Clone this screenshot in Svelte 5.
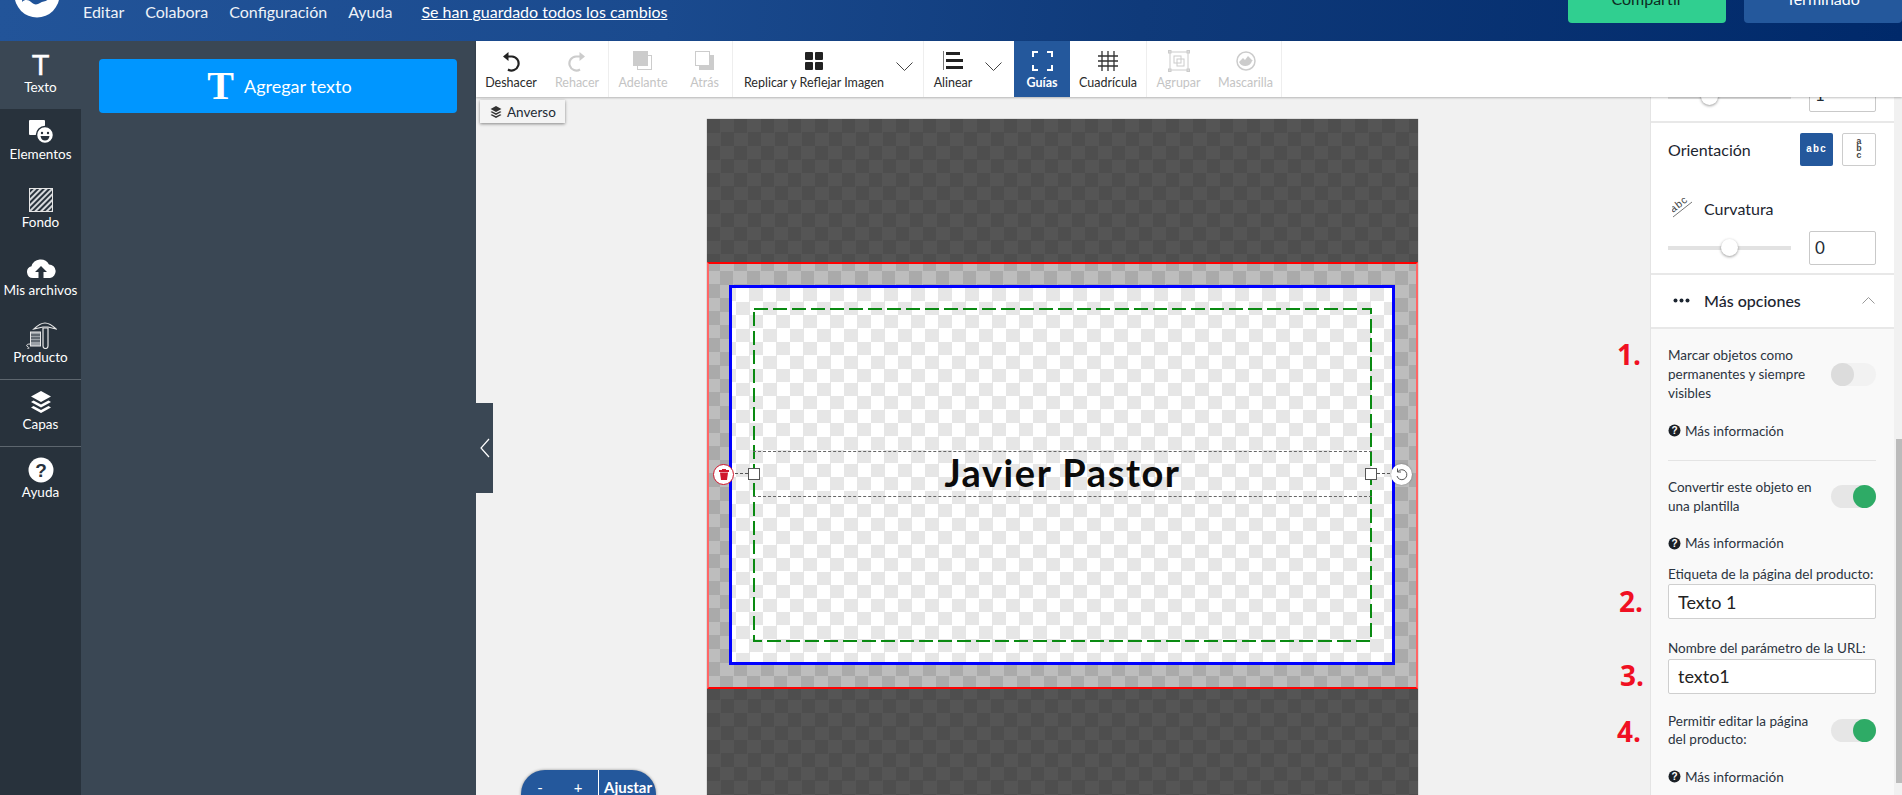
<script lang="ts">
	const nav = ["Editar", "Colabora", "Configuración", "Ayuda"];
	const rail = [
		{ id: "texto", label: "Texto", active: true },
		{ id: "elementos", label: "Elementos" },
		{ id: "fondo", label: "Fondo" },
		{ id: "archivos", label: "Mis archivos" },
		{ id: "producto", label: "Producto", divider: true },
		{ id: "capas", label: "Capas", divider: true },
		{ id: "ayuda", label: "Ayuda" }
	];
	const tools = [
		{ id: "undo", label: "Deshacer", w: 70 },
		{ id: "redo", label: "Rehacer", w: 63, off: true, sep: true },
		{ id: "front", label: "Adelante", w: 68, off: true },
		{ id: "back", label: "Atrás", w: 56, off: true, sep: true },
		{ id: "mirror", label: "Replicar y Reflejar Imagen", w: 162 },
		{ id: "chev", label: "", w: 29, sep: true },
		{ id: "align", label: "Alinear", w: 58 },
		{ id: "chev", label: "", w: 32 },
		{ id: "guides", label: "Guías", w: 56, active: true },
		{ id: "grid", label: "Cuadrícula", w: 77, sep: true },
		{ id: "group", label: "Agrupar", w: 63, off: true },
		{ id: "mask", label: "Mascarilla", w: 72, off: true, sep: true }
	];
	const marks = [
		{ n: "1.", cls: "m1" },
		{ n: "2.", cls: "m2" },
		{ n: "3.", cls: "m3" },
		{ n: "4.", cls: "m4" }
	];
</script>

<div class="app">
	<header class="top">
		<svg class="logo" viewBox="0 0 46 46" width="46" height="46">
			<circle cx="23" cy="23" r="22.5" fill="#fff" />
			<path d="M8 30c3-3 7-2 9 0 3 3 6 3 9 1 3-2 7-1 9-5 1-2 1-3 0-5-1 3-4 4-7 4-4 0-6 3-9 2-3-1-3-4-6-4-3 0-5 3-5 7z" fill="#1f5399" />
		</svg>
		<nav class="nav">
			{#each nav as item}
				<span>{item}</span>
			{/each}
			<a class="saved" href="#top">Se han guardado todos los cambios</a>
		</nav>
		<div class="actions">
			<button class="share">Compartir</button>
			<button class="done">Terminado</button>
		</div>
	</header>

	<div class="work">
		<aside class="rail">
			{#each rail as r}
				<div class="rail-item" class:active={r.active} class:divider={r.divider}>
					<div class="rail-icon">
						{#if r.id === "texto"}
							<span class="t-thin">T</span>
						{:else if r.id === "elementos"}
							<svg width="26" height="24" viewBox="0 0 26 24">
								<rect x="1" y="0" width="16" height="15" rx="1" fill="#fff" />
								<circle cx="17" cy="15" r="8.5" fill="#fff" stroke="#28323c" stroke-width="1.5" />
								<circle cx="14" cy="13" r="1.2" fill="#28323c" />
								<circle cx="20" cy="13" r="1.2" fill="#28323c" />
								<path d="M12.5 16h9c-.5 3-2 4.500-4.500 4.500s-4-1.500-4.500-4.500z" fill="#28323c" />
							</svg>
						{:else if r.id === "fondo"}
							<svg width="24" height="24" viewBox="0 0 24 24">
								<defs>
									<pattern id="hatch" width="4" height="4" patternUnits="userSpaceOnUse" patternTransform="rotate(45)">
										<rect width="4" height="4" fill="#28323c" />
										<rect width="2" height="4" fill="#d5d8db" />
									</pattern>
								</defs>
								<rect x=".5" y=".5" width="23" height="23" fill="url(#hatch)" stroke="#e6e6e6" />
							</svg>
						{:else if r.id === "archivos"}
							<svg width="30" height="20" viewBox="0 0 30 20">
								<path d="M7 20a6 6 0 0 1-1.500-11.800A9.500 9.500 0 0 1 23 6.500 6.800 6.800 0 0 1 24 20z" fill="#fff" />
								<path d="M15 8l-6 6h3.500v6h5v-6H21z" fill="#28323c" />
							</svg>
						{:else if r.id === "producto"}
							<svg width="32" height="27" viewBox="0 0 32 27" fill="none" stroke="#e8e8e8">
								<path d="M9 7C13 3 17 1 20 1c3 0 7 2 11 6l-8-2h-5z" stroke-width="1.200" />
								<path d="M18 6h5v18a2.500 2.500 0 0 1-5 0z" stroke-width="1.200" />
								<rect x="5.500" y="10" width="10" height="14" fill="#9aa0a6" stroke="#e8e8e8" />
								<path d="M6 13h9M6 16h9M6 19h9" stroke="#28323c" />
								<path d="M5 22c-4 0-4 2-2 3s1 2-1 2" stroke-width="1" />
							</svg>
						{:else if r.id === "capas"}
							<svg width="20" height="22" viewBox="0 0 20 22" fill="#fff">
								<path d="M10 0l10 5.500-10 5.500L0 5.500z" />
								<path d="M2.500 9.500L10 13.500l7.500-4 2.500 1.500-10 5.500L0 11z" />
								<path d="M2.500 15L10 19l7.500-4 2.500 1.500L10 22 0 16.500z" />
							</svg>
						{:else}
							<svg width="26" height="26" viewBox="0 0 26 26">
								<circle cx="13" cy="13" r="12.500" fill="#fff" />
								<text x="13" y="19.500" text-anchor="middle" class="q">?</text>
							</svg>
						{/if}
					</div>
					<span class="rail-label">{r.label}</span>
				</div>
			{/each}
		</aside>

		<section class="panel">
			<button class="add"><span class="t-slab">T</span>Agregar texto</button>
		</section>

		<div class="tab">
			<svg width="10" height="20" viewBox="0 0 10 20" fill="none" stroke="#fff" stroke-width="1.200">
				<path d="M9 1L1 10l8 9" />
			</svg>
		</div>

		<main class="main">
			<div class="toolbar">
				{#each tools as t}
					<div class="tool" class:off={t.off} class:on={t.active} class:sep={t.sep} style:width="{t.w}px">
						<div class="tool-icon">
							{#if t.id === "undo"}
								<svg width="22" height="22" viewBox="0 0 22 22" fill="none" stroke="#222" stroke-width="2.200">
									<path d="M7 6.500h5a7 7 0 1 1-4 13" />
									<path d="M8.500 2L3 6.500 8.500 11z" fill="#222" stroke="none" />
								</svg>
							{:else if t.id === "redo"}
								<svg width="22" height="22" viewBox="0 0 22 22" fill="none" stroke="#ccc" stroke-width="2.200">
									<path d="M15 6.500h-5a7 7 0 1 0 4 13" />
									<path d="M13.500 2L19 6.500 13.500 11z" fill="#ccc" stroke="none" />
								</svg>
							{:else if t.id === "front"}
								<svg width="20" height="20" viewBox="0 0 20 20">
									<rect x="4.500" y="4.500" width="14" height="14" fill="#fff" stroke="#ccc" />
									<rect x="0" y="0" width="15" height="15" fill="#ccc" />
								</svg>
							{:else if t.id === "back"}
								<svg width="20" height="20" viewBox="0 0 20 20">
									<rect x="4" y="4" width="15" height="15" fill="#ccc" />
									<rect x=".5" y=".5" width="14" height="14" fill="#fff" stroke="#ccc" />
								</svg>
							{:else if t.id === "mirror"}
								<svg width="18" height="18" viewBox="0 0 18 18" fill="#222">
									<rect width="8" height="8" rx="1" />
									<rect x="10" width="8" height="8" rx="1" />
									<rect y="10" width="8" height="8" rx="1" />
									<rect x="10" y="10" width="8" height="8" rx="1" />
								</svg>
							{:else if t.id === "chev"}
								<svg class="chev" width="17" height="9" viewBox="0 0 17 9" fill="none" stroke="#444">
									<path d="M.5.500l8 8 8-8" />
								</svg>
							{:else if t.id === "align"}
								<svg width="20" height="20" viewBox="0 0 20 20" fill="#222">
									<rect x="0" y="0" width="1" height="19" fill="#777" />
									<rect x="3" y="1" width="14" height="3" />
									<rect x="3" y="8" width="17" height="3" />
									<rect x="3" y="15" width="17" height="3" />
								</svg>
							{:else if t.id === "guides"}
								<svg width="21" height="20" viewBox="0 0 21 20" fill="none" stroke="#fff" stroke-width="2">
									<path d="M1 6V1h5M15 1h5v5M20 14v5h-5M6 19H1v-5" />
								</svg>
							{:else if t.id === "grid"}
								<svg width="20" height="20" viewBox="0 0 20 20" fill="none" stroke="#333" stroke-width="1.300">
									<path d="M4 0v20M10 0v20M16 0v20M0 5h20M0 10h20M0 15h20" />
								</svg>
							{:else if t.id === "group"}
								<svg width="22" height="22" viewBox="0 0 22 22" fill="none" stroke="#ccc">
									<rect x="2" y="2" width="18" height="18" />
									<rect x="6" y="6" width="7" height="7" />
									<rect x="9" y="9" width="7" height="7" />
									<g fill="#ddd">
										<rect x=".5" y=".5" width="2.500" height="2.500" />
										<rect x="19" y=".5" width="2.500" height="2.500" />
										<rect x=".5" y="19" width="2.500" height="2.500" />
										<rect x="19" y="19" width="2.500" height="2.500" />
									</g>
								</svg>
							{:else if t.id === "mask"}
								<svg width="20" height="20" viewBox="0 0 20 20" fill="none">
									<circle cx="10" cy="10" r="9" stroke="#ccc" stroke-width="1.500" />
									<path d="M3 11l4-4 2 2 3-4 5 5-1 0a7 7 0 0 1-13 1z" fill="#ccc" />
								</svg>
							{/if}
						</div>
						{#if t.label}<span class="tool-label">{t.label}</span>{/if}
					</div>
				{/each}
			</div>

			<div class="below">
				<div class="stage">
					<div class="side-tag">
						<svg width="12" height="12" viewBox="0 0 20 22" fill="#333">
							<path d="M10 0l10 5.500-10 5.500L0 5.500z" />
							<path d="M2.500 9.500L10 13.500l7.500-4 2.500 1.500-10 5.500L0 11z" />
							<path d="M2.500 15L10 19l7.500-4 2.500 1.500L10 22 0 16.500z" />
						</svg>
						Anverso
					</div>

					<div class="board">
						<div class="bleed">
							<div class="trim">
								<div class="safe">
									<svg class="safe-line" width="619" height="334">
										<rect x="1" y="1" width="617" height="332" fill="none" stroke="#0a8a12" stroke-width="2" stroke-dasharray="14 5" />
									</svg>
									<div class="text-box">
										<span class="name">Javier Pastor</span>
										<i class="handle left"></i>
										<i class="handle right"></i>
										<i class="stem left"></i>
										<i class="stem right"></i>
										<div class="round del">
											<svg width="10" height="11" viewBox="0 0 10 11" fill="#d0152b">
												<rect x="0" y="1" width="10" height="2" />
												<path d="M1 3.500h8L8 11H2z" />
												<rect x="3" y="0" width="4" height="1.500" />
											</svg>
										</div>
										<div class="round rot">
											<svg width="13" height="13" viewBox="0 0 13 13" fill="none" stroke="#555">
												<path d="M3 3.500A5 5 0 1 1 2 8" />
												<path d="M2.500 .5v3.500H6" />
											</svg>
										</div>
									</div>
								</div>
							</div>
						</div>
					</div>

					<div class="zoom-ctl">
						<span class="z">-</span>
						<span class="z">+</span>
						<span class="fit">Ajustar</span>
					</div>
				</div>

				<aside class="props">
					<div class="props-col">
						<div class="sec first">
							<div class="slider-row">
								<div class="slider"><i class="thumb t1"></i></div>
								<div class="num">1</div>
							</div>
						</div>
						<div class="sec second">
							<div class="orient">
								<span class="lbl">Orientación</span>
								<div class="orient-btns">
									<div class="o-btn sel">abc</div>
									<div class="o-btn vert"><span>a</span><span>b</span><span>c</span></div>
								</div>
							</div>
							<div class="curve">
								<svg width="22" height="21" viewBox="0 0 22 21" fill="none">
									<path d="M1 19L20 4" stroke="#777" />
									<text x="1" y="15" transform="rotate(-38 1 15)" class="abc">abc</text>
								</svg>
								<span class="lbl">Curvatura</span>
							</div>
							<div class="slider-row">
								<div class="slider"><i class="thumb t2"></i></div>
								<div class="num">0</div>
							</div>
						</div>
						<div class="sec more">
							<svg width="17" height="5" viewBox="0 0 17 5" fill="#1c2530">
								<circle cx="2.500" cy="2.500" r="2" /><circle cx="8.500" cy="2.500" r="2" /><circle cx="14.500" cy="2.500" r="2" />
							</svg>
							<span class="lbl">Más opciones</span>
							<svg class="up" width="13" height="7" viewBox="0 0 13 7" fill="none" stroke="#999">
								<path d="M.5 6.500l6-6 6 6" />
							</svg>
						</div>
						<div class="opts">
							<div class="toggle-row r1">
								<p>Marcar objetos como permanentes y siempre visibles</p>
								<div class="toggle"></div>
							</div>
							{@render info("i1")}
							<hr />
							<div class="toggle-row r2">
								<p>Convertir este objeto en una plantilla</p>
								<div class="toggle yes"></div>
							</div>
							{@render info("i2")}
							<label class="field f1">
								<span>Etiqueta de la página del producto:</span>
								<input value="Texto 1" />
							</label>
							<label class="field f2">
								<span>Nombre del parámetro de la URL:</span>
								<input value="texto1" />
							</label>
							<div class="toggle-row r3">
								<p>Permitir editar la página del producto:</p>
								<div class="toggle yes"></div>
							</div>
							{@render info("i3")}
						</div>
					</div>
					<div class="scroll"><i></i></div>
				</aside>

				{#each marks as m}
					<span class="mark {m.cls}">{m.n}</span>
				{/each}
			</div>
		</main>
	</div>
</div>

{#snippet info(cls: string)}
	<div class="info {cls}">
		<svg width="13" height="13" viewBox="0 0 13 13">
			<circle cx="6.500" cy="6.500" r="6" fill="#1b2026" />
			<text x="6.500" y="10" text-anchor="middle" class="q-small">?</text>
		</svg>
		Más información
	</div>
{/snippet}

<style>
	:global(body) {
		margin: 0;
		overflow: hidden;
		background: #f1f1f1;
	}
	.app {
		width: 1902px;
		height: 795px;
		overflow: hidden;
		display: flex;
		flex-direction: column;
		font-family: "Lato", "Liberation Sans", sans-serif;
		color: #222b35;
	}

	/* header, cut off at the top because the page is scrolled */
	.top {
		flex: none;
		height: 41px;
		display: flex;
		align-items: flex-end;
		overflow: hidden;
		background: linear-gradient(95deg, #225499 0%, #1a4a8e 35%, #0f3a7a 60%, #00296a 100%);
		color: #fff;
	}
	.logo {
		flex: none;
		margin: 0 0 23px 14px;
	}
	.nav {
		display: flex;
		gap: 21px;
		margin: 0 0 19px 23px;
		font-size: 16px;
		line-height: 20px;
		white-space: nowrap;
		color: #eef2f8;
	}
	.saved {
		margin-left: 8px;
		color: #fff;
	}
	.actions {
		display: flex;
		gap: 18px;
		margin: 0 0 18px auto;
	}
	.actions button {
		width: 158px;
		height: 50px;
		border: none;
		border-radius: 4px;
		font: 16px "Lato", sans-serif;
		padding: 0;
	}
	.share {
		background: #30cf90;
		color: #0d2b1e;
	}
	.done {
		background: #24589c;
		color: #fff;
	}

	.work {
		flex: 1;
		min-height: 0;
		display: flex;
		position: relative;
	}

	.rail {
		flex: none;
		width: 81px;
		background: #28323c;
		color: #fff;
	}
	.rail-item {
		height: 68px;
		box-sizing: border-box;
		display: flex;
		flex-direction: column;
		align-items: center;
		justify-content: flex-end;
		padding-bottom: 15px;
	}
	.rail-item.active {
		background: #3a4754;
		padding-bottom: 14px;
	}
	.rail-item.divider {
		height: 67px;
		border-bottom: 1px solid #5d666e;
		padding-bottom: 14px;
	}
	.rail-icon {
		height: 26px;
		display: flex;
		align-items: center;
		justify-content: center;
		margin-bottom: 2px;
	}
	.rail-label {
		font-size: 13.5px;
		line-height: 15px;
		white-space: nowrap;
	}
	.t-thin {
		font: 29px/26px "Liberation Sans", sans-serif;
		-webkit-text-stroke: 0.5px #fff;
		color: #fff;
	}
	.q {
		font: bold 19px "Liberation Sans", sans-serif;
		fill: #28323c;
	}
	.q-small {
		font: bold 10px "Liberation Sans", sans-serif;
		fill: #fff;
	}

	.panel {
		flex: none;
		width: 395px;
		box-sizing: border-box;
		padding: 18px 19px 0 18px;
		background: #3a4754;
	}
	.add {
		width: 100%;
		height: 54px;
		display: flex;
		align-items: center;
		justify-content: center;
		gap: 10px;
		border: none;
		border-radius: 4px;
		padding: 0 0 0 3px;
		background: #0096ff;
		color: #fff;
		font: 18px "Lato", sans-serif;
	}
	.t-slab {
		font: bold 40px/30px "Liberation Serif", serif;
	}

	.tab {
		position: absolute;
		left: 476px;
		top: 362px;
		z-index: 3;
		width: 17px;
		height: 90px;
		background: #3a4754;
		display: flex;
		align-items: center;
		justify-content: center;
	}

	.main {
		flex: 1;
		min-width: 0;
		display: flex;
		flex-direction: column;
	}

	.toolbar {
		flex: none;
		height: 56px;
		display: flex;
		background: #fff;
		position: relative;
		z-index: 2;
		box-shadow: 0 1px 2px rgba(0, 0, 0, 0.25);
	}
	.tool {
		flex: none;
		box-sizing: border-box;
		display: flex;
		flex-direction: column;
		align-items: center;
		padding-top: 8px;
		color: #2a2a2a;
	}
	.tool.sep {
		border-right: 1px solid #eee;
	}
	.tool.off {
		color: #c4c4c4;
	}
	.tool.on {
		background: #24589c;
		color: #fff;
		font-weight: 700;
	}
	.tool-icon {
		height: 23px;
		display: flex;
		align-items: center;
		justify-content: center;
	}
	.chev {
		margin: 12px 9px 0 0;
	}
	.tool-label {
		margin-top: 3px;
		font-size: 12.5px;
		line-height: 15px;
		white-space: nowrap;
	}

	.below {
		flex: 1;
		min-height: 0;
		display: flex;
		position: relative;
	}
	.stage {
		flex: 1;
		min-width: 0;
		position: relative;
		padding: 22px 0 0 231px;
		overflow: hidden;
	}
	.side-tag {
		position: absolute;
		left: 4px;
		top: 3px;
		height: 23px;
		width: 85px;
		box-sizing: border-box;
		display: flex;
		align-items: center;
		gap: 5px;
		padding-left: 10px;
		background: #f4f4f4;
		box-shadow: 0 1px 3px rgba(0, 0, 0, 0.45);
		font-size: 13.5px;
		z-index: 1;
	}

	.board {
		width: 711px;
		height: 720px;
		box-sizing: border-box;
		padding-top: 143px;
		background: repeating-conic-gradient(#555 0 25%, #4e4e4e 0 50%) 0 0 / 27px 27px;
		box-shadow: 0 0 1px #777;
	}
	.bleed {
		height: 427px;
		box-sizing: border-box;
		padding: 21px 21px 22px 20px;
		border-top: 2px solid #f00;
		border-bottom: 2px solid #f00;
		border-left: 2px solid #f66;
		border-right: 2px solid #f66;
		background: repeating-conic-gradient(#bdbdbd 0 25%, #aaa 0 50%) 11px 7px / 27px 27px;
	}
	.trim {
		height: 100%;
		box-sizing: border-box;
		padding: 20px 20px 20px 21px;
		border: 3px solid #0000ff;
		background: repeating-conic-gradient(#e6e6e6 0 25%, #fff 0 50%) 4px 0 / 27px 27px;
	}
	.safe {
		position: relative;
		height: 100%;
		box-sizing: border-box;
		display: flex;
		align-items: center;
	}
	.safe-line {
		position: absolute;
		left: 0;
		top: 0;
	}
	.text-box {
		position: relative;
		width: 100%;
		height: 46px;
		margin-top: -3px;
		box-sizing: border-box;
		display: flex;
		align-items: center;
		justify-content: center;
		border-top: 1px dashed #666;
		border-bottom: 1px dashed #666;
	}
	.name {
		font-family: "Lato", sans-serif;
		font-weight: 700;
		font-size: 38px;
		color: #0b0b0b;
		letter-spacing: 1.55px;
		padding-bottom: 3px;
	}
	.handle {
		position: absolute;
		top: 16px;
		width: 10px;
		height: 10px;
		background: #fff;
		border: 1px solid #555;
		box-sizing: content-box;
	}
	.handle.left {
		left: -5px;
	}
	.handle.right {
		right: -5px;
	}
	.stem {
		position: absolute;
		top: 21px;
		width: 18px;
		border-top: 1px dashed #555;
	}
	.stem.left {
		left: -23px;
	}
	.stem.right {
		right: -23px;
	}
	.round {
		position: absolute;
		top: 12px;
		width: 21px;
		height: 21px;
		box-sizing: border-box;
		border-radius: 50%;
		background: #fff;
		display: flex;
		align-items: center;
		justify-content: center;
	}
	.del {
		left: -40px;
		border: 1px solid #d0152b;
	}
	.rot {
		right: -40px;
		box-shadow: 0 0 2px rgba(0, 0, 0, 0.4);
	}

	.zoom-ctl {
		position: absolute;
		left: 45px;
		top: 673px;
		width: 135px;
		height: 48px;
		box-sizing: border-box;
		padding-top: 7px;
		display: flex;
		align-items: flex-start;
		background: #24589c;
		color: #fff;
		border-radius: 24px;
		box-shadow: 0 0 3px rgba(0, 0, 0, 0.4);
		font-size: 15px;
	}
	.z {
		width: 38px;
		text-align: center;
		line-height: 20px;
	}
	.fit {
		margin-left: 1px;
		padding-left: 5px;
		height: 42px;
		margin-top: -7px;
		padding-top: 7px;
		border-left: 1px solid #fff;
		font-weight: 700;
		line-height: 20px;
	}

	.props {
		flex: none;
		width: 252px;
		display: flex;
		gap: 2px;
		overflow: hidden;
		background: #f1f1f1;
	}
	.props-col {
		width: 244px;
		box-sizing: border-box;
		border-left: 1px solid #e4e4e4;
		background: #f9f9f9;
	}
	.sec {
		background: #fff;
		border-bottom: 2px solid #e8e8e8;
		padding: 0 18px 0 17px;
		box-sizing: border-box;
	}
	.sec.first {
		margin-top: -19px;
		padding-bottom: 9px;
	}
	.sec.first .slider {
		margin-top: 4px;
	}
	.sec.second {
		padding-top: 10px;
		padding-bottom: 8px;
	}
	.slider-row {
		display: flex;
		align-items: center;
		justify-content: space-between;
	}
	.slider {
		position: relative;
		width: 123px;
		height: 4px;
		background: #e2e2e2;
	}
	.thumb {
		position: absolute;
		top: -7px;
		width: 17px;
		height: 17px;
		border-radius: 50%;
		background: #fff;
		box-shadow: 0 1px 3px rgba(0, 0, 0, 0.4);
	}
	.t1 {
		left: 33px;
	}
	.t2 {
		left: 53px;
	}
	.num {
		width: 67px;
		height: 34px;
		box-sizing: border-box;
		border: 1px solid #c9c9c9;
		border-radius: 2px;
		background: #fff;
		padding-left: 5px;
		font-size: 17px;
		line-height: 32px;
	}
	.lbl {
		font-size: 16px;
		color: #1c2530;
	}
	.orient {
		display: flex;
		align-items: center;
		justify-content: space-between;
	}
	.orient-btns {
		display: flex;
		gap: 9px;
	}
	.o-btn {
		width: 33px;
		height: 33px;
		box-sizing: border-box;
		border-radius: 2px;
		display: flex;
		align-items: center;
		justify-content: center;
		font: bold 10px "Liberation Mono", monospace;
	}
	.o-btn.sel {
		background: #24589c;
		color: #fff;
		letter-spacing: 1px;
	}
	.o-btn.vert {
		width: 34px;
		flex-direction: column;
		border: 1px solid #ccc;
		color: #444;
		line-height: 7px;
		font-size: 9px;
	}
	.curve {
		display: flex;
		align-items: center;
		gap: 10px;
		margin: 32px 0 11.5px 4px;
		height: 21px;
	}
	.abc {
		font: 10.5px "Liberation Sans", sans-serif;
		letter-spacing: 1px;
		fill: #444;
	}
	.sec.more {
		height: 54px;
		display: flex;
		align-items: center;
		padding-left: 22px;
		padding-right: 0;
	}
	.more .lbl {
		margin-left: 14px;
		font-weight: 500;
	}
	.up {
		margin-left: auto;
		margin-right: 19px;
	}
	.opts {
		padding: 17px 18px 0 17px;
		font-size: 13.5px;
		line-height: 18.5px;
		color: #2b3440;
	}
	.opts p {
		margin: 0;
		width: 150px;
	}
	.r1 p {
		line-height: 19px;
	}
	.toggle-row {
		display: flex;
		align-items: center;
		justify-content: space-between;
	}
	.toggle {
		position: relative;
		flex: none;
		width: 45px;
		height: 23px;
		border-radius: 12px;
		background: #f2f2f2;
	}
	.toggle::after {
		content: "";
		position: absolute;
		left: 0;
		top: 0;
		width: 23px;
		height: 23px;
		border-radius: 50%;
		background: #dcdcdc;
	}
	.toggle.yes {
		background: #e6e6e6;
	}
	.toggle.yes::after {
		left: 22px;
		background: #2eab66;
	}
	.info {
		display: flex;
		align-items: center;
		gap: 4px;
		margin-top: 19px;
	}
	.opts hr {
		border: none;
		border-top: 1px solid #e4e4e4;
		margin: 20px 0 17px;
	}
	.field {
		display: block;
		margin-top: 12px;
	}
	.field span {
		display: block;
		white-space: nowrap;
	}
	.field input {
		display: block;
		width: 208px;
		height: 35px;
		box-sizing: border-box;
		margin: 1px 0 0;
		padding: 0 9px;
		border: 1px solid #cfcfcf;
		border-radius: 2px;
		background: #fff;
		font: 18px "Lato", sans-serif;
		color: #222;
	}
	.field.f2 {
		margin-top: 20px;
	}
	.r3 {
		margin-top: 18px;
	}
	.r3 p {
		width: 145px;
	}
	.scroll {
		width: 6px;
		background: #f1f1f1;
		padding-top: 342px;
	}
	.scroll i {
		display: block;
		height: 344px;
		background: #bbb;
	}

	/* red annotation numbers drawn over the screenshot */
	.mark {
		position: absolute;
		left: 1617px;
		font: bold 28px/34px "Open Sans", sans-serif;
		color: #f01022;
		transform: translateX(-476px);
	}
	.m1 {
		top: 240px;
	}
	.m2 {
		top: 487px;
		left: 1619px;
	}
	.m3 {
		top: 561px;
		left: 1620px;
	}
	.m4 {
		top: 617px;
		left: 1617px;
	}
</style>
